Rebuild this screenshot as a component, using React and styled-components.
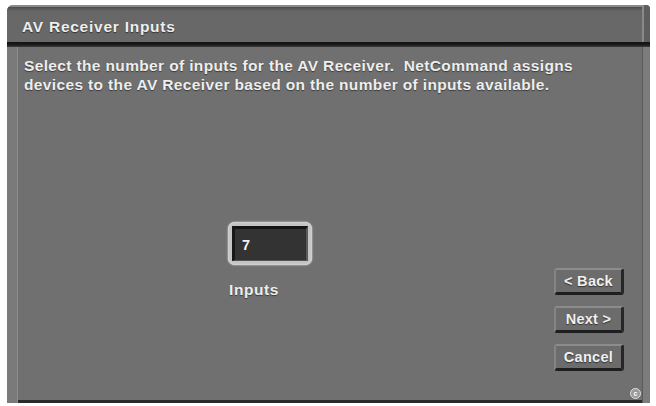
import React from "react";
import styled, { createGlobalStyle } from "styled-components";

const Global = createGlobalStyle`
  html, body { margin: 0; padding: 0; background: #ffffff; }
  body { font-family: "Liberation Sans", Arial, sans-serif; }
`;

const Page = styled.div`
  width: 656px;
  height: 406px;
  padding: 5px 6px 3px 7px;
  box-sizing: border-box;
`;

const Window = styled.div`
  height: 100%;
  display: flex;
  flex-direction: column;
  background: #707070;
  border-radius: 6px 4px 0 0;
  overflow: hidden;
  box-shadow: inset 0 -3px 0 #2a2a2a;
`;

const TitleBar = styled.div`
  height: 37px;
  box-sizing: border-box;
  display: flex;
  align-items: center;
  padding: 6px 0 0 15px;
  background: linear-gradient(#8a8a8a 0, #8a8a8a 2px, #4a4a4a 2px, #5a5a5a 4px, #676767 6px, #696969 100%);
  border-right: 6px solid #5e5e5e;
  box-shadow: inset -2px 0 0 #8a8a8a;
`;

const Title = styled.h1`
  margin: 0;
  font-size: 15.5px;
  font-weight: bold;
  color: #eeeeee;
  letter-spacing: 0.75px;
  text-shadow: 0 1px 1px #333;
`;

const Divider = styled.div`
  height: 5px;
  background: linear-gradient(#111 0, #1c1c1c 60%, #3e3e3e 100%);
`;

const Body = styled.div`
  flex: 1;
  display: flex;
  flex-direction: column;
  border-left: 10px solid #7a7a7a;
  border-right: 7px solid #7c7c7c;
  box-shadow: inset 1px 0 0 #8e8e8e, inset -1px 0 0 #5a5a5a;
  padding: 9px 0 0 7px;
  position: relative;
`;

const Description = styled.p`
  margin: 0;
  font-size: 15.5px;
  line-height: 19px;
  font-weight: bold;
  letter-spacing: 0.36px;
  color: #eeeeee;
  text-shadow: 0 1px 1px #3a3a3a;
  white-space: pre-wrap;
`;

const Content = styled.div`
  flex: 1;
  display: flex;
  align-items: flex-start;
  padding-top: 128px;
`;

const InputGroup = styled.div`
  display: flex;
  flex-direction: column;
  align-items: flex-start;
  margin-left: 204px;
  gap: 16px;
`;

const Field = styled.div`
  width: 84px;
  height: 43px;
  box-sizing: border-box;
  padding: 4px;
  border-radius: 7px;
  background: #c4c4c4;
  box-shadow: 0 0 2px #e8e8e8, inset 0 0 2px #f0f0f0;
`;

const FieldInner = styled.div`
  height: 100%;
  box-sizing: border-box;
  background: #333333;
  border-top: 3px solid #141414;
  border-left: 3px solid #181818;
  border-right: 2px solid #5a5a5a;
  border-bottom: 1px solid #555;
  display: flex;
  align-items: center;
  padding-left: 7px;
  font-size: 14.5px;
  font-weight: bold;
  color: #f2f2f2;
`;

const Label = styled.span`
  margin-left: 1px;
  font-size: 15.5px;
  font-weight: bold;
  letter-spacing: 0.6px;
  color: #eeeeee;
  text-shadow: 0 1px 1px #3a3a3a;
`;

const Buttons = styled.div`
  margin-left: auto;
  margin-right: 19px;
  margin-top: 46px;
  display: flex;
  flex-direction: column;
  gap: 11px;
`;

const Button = styled.button`
  width: 70px;
  height: 27px;
  box-sizing: border-box;
  font-family: "Liberation Sans", Arial, sans-serif;
  font-size: 14.5px;
  font-weight: bold;
  letter-spacing: 0.3px;
  color: #f0f0f0;
  text-shadow: 0 1px 1px #333;
  background: #6c6c6c;
  border-top: 2px solid #8c8c8c;
  border-left: 2px solid #858585;
  border-right: 3px solid #262626;
  border-bottom: 3px solid #1e1e1e;
  border-radius: 3px;
  padding: 0;
  cursor: pointer;
`;

const Copyright = styled.span`
  position: absolute;
  right: 2px;
  bottom: 4px;
  width: 9px;
  height: 9px;
  border-radius: 50%;
  border: 1px solid #e0e0e0;
  background: #9a9a9a;
  font-size: 7px;
  line-height: 9px;
  text-align: center;
  color: #fff;
  font-weight: bold;
`;

export default function App() {
  return (
    <Page>
      <Global />
      <Window>
        <TitleBar>
          <Title>AV Receiver Inputs</Title>
        </TitleBar>
        <Divider />
        <Body>
          <Description>
            {"Select the number of inputs for the AV Receiver.  NetCommand assigns\ndevices to the AV Receiver based on the number of inputs available."}
          </Description>
          <Content>
            <InputGroup>
              <Field>
                <FieldInner>7</FieldInner>
              </Field>
              <Label>Inputs</Label>
            </InputGroup>
            <Buttons>
              <Button>&lt; Back</Button>
              <Button>Next &gt;</Button>
              <Button>Cancel</Button>
            </Buttons>
          </Content>
          <Copyright>c</Copyright>
        </Body>
      </Window>
    </Page>
  );
}
